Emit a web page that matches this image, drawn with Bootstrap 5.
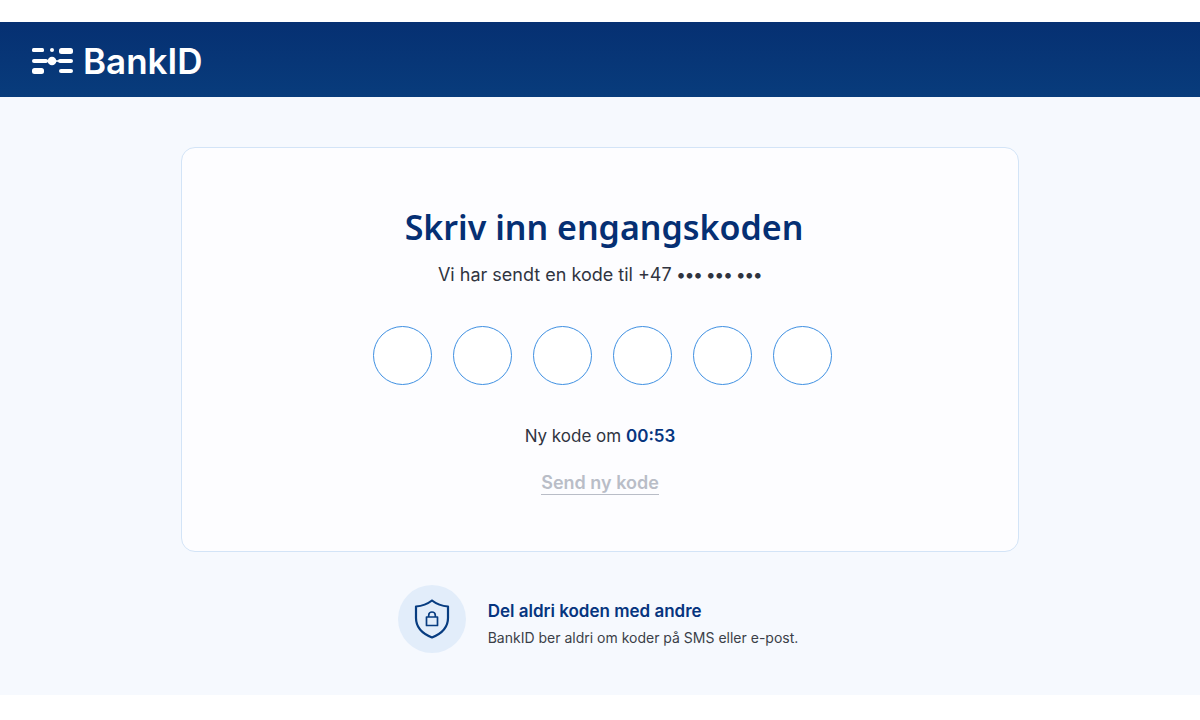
<!DOCTYPE html>
<html lang="nb">
<head>
<meta charset="utf-8">
<meta name="viewport" content="width=device-width, initial-scale=1">
<title>BankID – engangskode</title>
<link href="https://cdn.jsdelivr.net/npm/bootstrap@5.3.0/dist/css/bootstrap.min.css" rel="stylesheet">
<style>
  body { font-family: Inter, "Liberation Sans", sans-serif; color: #30343f; background: #fff; padding: 22px 0 25px; }
  .topbar { background: linear-gradient(#063072, #083c7c); min-height: 75px; padding: 2px 32px 0; }
  .brand-link { gap: 10px; }
  .brand-name { font-size: 35px; line-height: 40px; font-weight: 600; color: #fff; }
  .page-area { background: #f6f9fe; padding: 50px 16px 42px; }
  .code-card { max-width: 838px; border: 1px solid #d3e4f7; border-radius: 14px; background: #fdfdff; padding: 55px 16px 56px; }
  .code-title { font-family: "Noto Sans", sans-serif; font-size: 34px; line-height: 48px; font-weight: 600; color: #052f73; }
  .code-text { font-size: 17px; line-height: 24px; }
  .code-sent { font-size: 18px; line-height: 24px; margin-top: 12px; }
  .masked { font-size: 18px; font-weight: 700; line-height: 1; }
  .code-row { gap: 21px; margin: 39px 0; }
  .code-digit { width: 59px; height: 59px; border: 1px solid #3f90e2; background: #fff; font-size: 24px; color: #052f73; padding: 0; }
  .strong-blue { color: #06357f; font-weight: 600; }
  .resend { font-size: 18px; line-height: 22px; font-weight: 600; color: #b9bdc7; border: 0; border-bottom: 1px solid #b9bdc7; margin-top: 24px; }
  .notice { margin-top: 33px; gap: 22px; }
  .notice-icon { width: 68px; height: 68px; background: #e2edfa; }
  .notice-title { font-size: 17px; line-height: 24px; }
  .notice-text { font-size: 14px; line-height: 20px; margin-top: 5px; color: #3b3f48; }
</style>
</head>
<body class="min-vh-100 d-flex flex-column">
<header class="topbar d-flex align-items-center">
  <a href="#" class="brand-link d-flex align-items-center text-decoration-none" aria-label="BankID">
    <svg width="41" height="28" viewBox="0 0 41 28" fill="#fff" aria-hidden="true">
      <rect x="0" y="1" width="12" height="4" rx="1.500"/>
      <circle cx="20" cy="3" r="2"/>
      <rect x="27" y="1" width="14" height="6" rx="2.500"/>
      <rect x="0" y="12" width="16" height="4" rx="2"/>
      <path d="M14 13.200H27V14.800H14z"/>
      <circle cx="20" cy="14" r="4.300"/>
      <rect x="26" y="12" width="15" height="4" rx="2"/>
      <rect x="0" y="21" width="12" height="6" rx="2.500"/>
      <rect x="27" y="22" width="14" height="4" rx="2"/>
    </svg>
    <span class="brand-name">BankID</span>
  </a>
</header>
<main class="page-area flex-grow-1">
  <section class="code-card mx-auto text-center">
    <h1 class="code-title mb-0 ps-2">Skriv inn engangskoden</h1>
    <p class="code-sent mb-0">Vi har sendt en kode til +47 <span class="masked">••• ••• •••</span></p>
    <form class="code-row d-flex justify-content-center ps-1">
      <input class="code-digit rounded-circle text-center" type="text" inputmode="numeric" maxlength="1" aria-label="Siffer 1">
      <input class="code-digit rounded-circle text-center" type="text" inputmode="numeric" maxlength="1" aria-label="Siffer 2">
      <input class="code-digit rounded-circle text-center" type="text" inputmode="numeric" maxlength="1" aria-label="Siffer 3">
      <input class="code-digit rounded-circle text-center" type="text" inputmode="numeric" maxlength="1" aria-label="Siffer 4">
      <input class="code-digit rounded-circle text-center" type="text" inputmode="numeric" maxlength="1" aria-label="Siffer 5">
      <input class="code-digit rounded-circle text-center" type="text" inputmode="numeric" maxlength="1" aria-label="Siffer 6">
    </form>
    <p class="code-text mb-0">Ny kode om <span class="strong-blue">00:53</span></p>
    <button type="button" class="resend bg-transparent p-0">Send ny kode</button>
  </section>
  <section class="notice d-flex justify-content-center align-items-center pe-1">
    <div class="notice-icon rounded-circle d-flex align-items-center justify-content-center flex-shrink-0">
      <svg width="36" height="40" viewBox="0 0 36 40" fill="none" stroke="#073c80" stroke-width="2.200" stroke-linejoin="round" aria-hidden="true">
        <path d="M18 1.500C13.500 5 8.500 7 2 7.500V19C2 28 8 34.500 18 38.500C28 34.500 34 28 34 19V7.500C27.500 7 22.500 5 18 1.500Z"/>
        <rect x="12.500" y="18" width="11" height="8.500" stroke-width="1.700"/>
        <path d="M14.700 18V16.300a3.300 3.300 0 0 1 6.600 0V18" stroke-width="1.700"/>
      </svg>
    </div>
    <div class="pt-2">
      <h2 class="notice-title strong-blue mb-0">Del aldri koden med andre</h2>
      <p class="notice-text mb-0">BankID ber aldri om koder på SMS eller e-post.</p>
    </div>
  </section>
</main>
<script src="https://cdn.jsdelivr.net/npm/bootstrap@5.3.0/dist/js/bootstrap.bundle.min.js"></script>
</body>
</html>
